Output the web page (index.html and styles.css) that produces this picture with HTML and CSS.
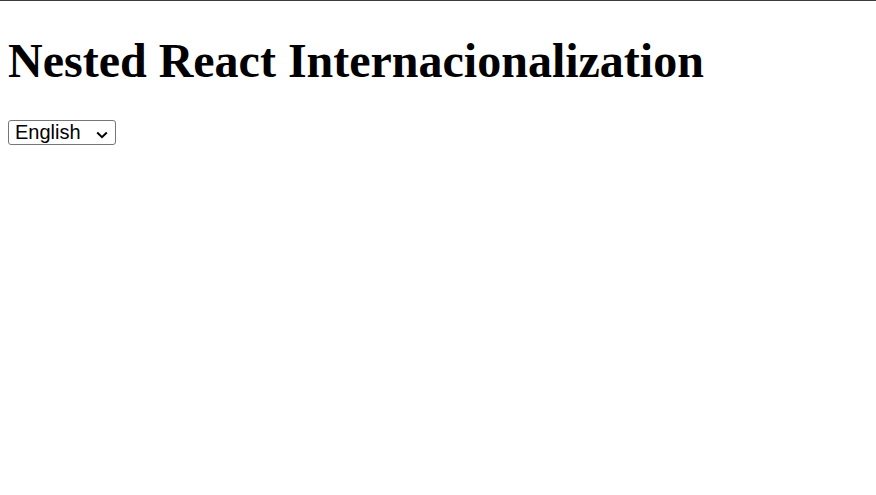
FILE: index.html
```html
<!DOCTYPE html>
<html>
<head>
<meta charset="utf-8">
<link rel="stylesheet" href="styles.css">
</head>
<body>
<div class="app">
  <h1 class="title">Nested React Internacionalization</h1>
  <div class="lang">
    <span class="select-wrap">
      <select class="lang-select">
        <option>English</option>
        <option>Español</option>
      </select>
      <svg class="chevron" width="12" height="8" viewBox="0 0 12 8" aria-hidden="true">
        <path d="M1.2 1.5 L6 6.2 L10.8 1.5" fill="none" stroke="#000" stroke-width="2"/>
      </svg>
    </span>
  </div>
</div>
</body>
</html>
```
FILE: styles.css
```css
html {
  border-top: 1px solid #3c3c3c;
}
body {
  margin: 8px;
  font-family: "Liberation Serif", serif;
  background: #fff;
}
.title {
  font-family: "Liberation Serif", serif;
  font-size: 48px;
  font-weight: bold;
  margin: 24px 0 32px;
}
.lang {
  display: flex;
}
.select-wrap {
  position: relative;
  display: inline-flex;
}
.lang-select {
  appearance: none;
  -webkit-appearance: none;
  font-family: "Liberation Sans", Arial, sans-serif;
  font-size: 20px;
  line-height: 23px;
  color: #000;
  width: 108px;
  height: 25px;
  margin: 0;
  padding: 0 0 0 6px;
  border: 1px solid #767676;
  border-radius: 3px;
  background: #fff;
}
.chevron {
  position: absolute;
  left: 88px;
  top: 11px;
  pointer-events: none;
}
```
